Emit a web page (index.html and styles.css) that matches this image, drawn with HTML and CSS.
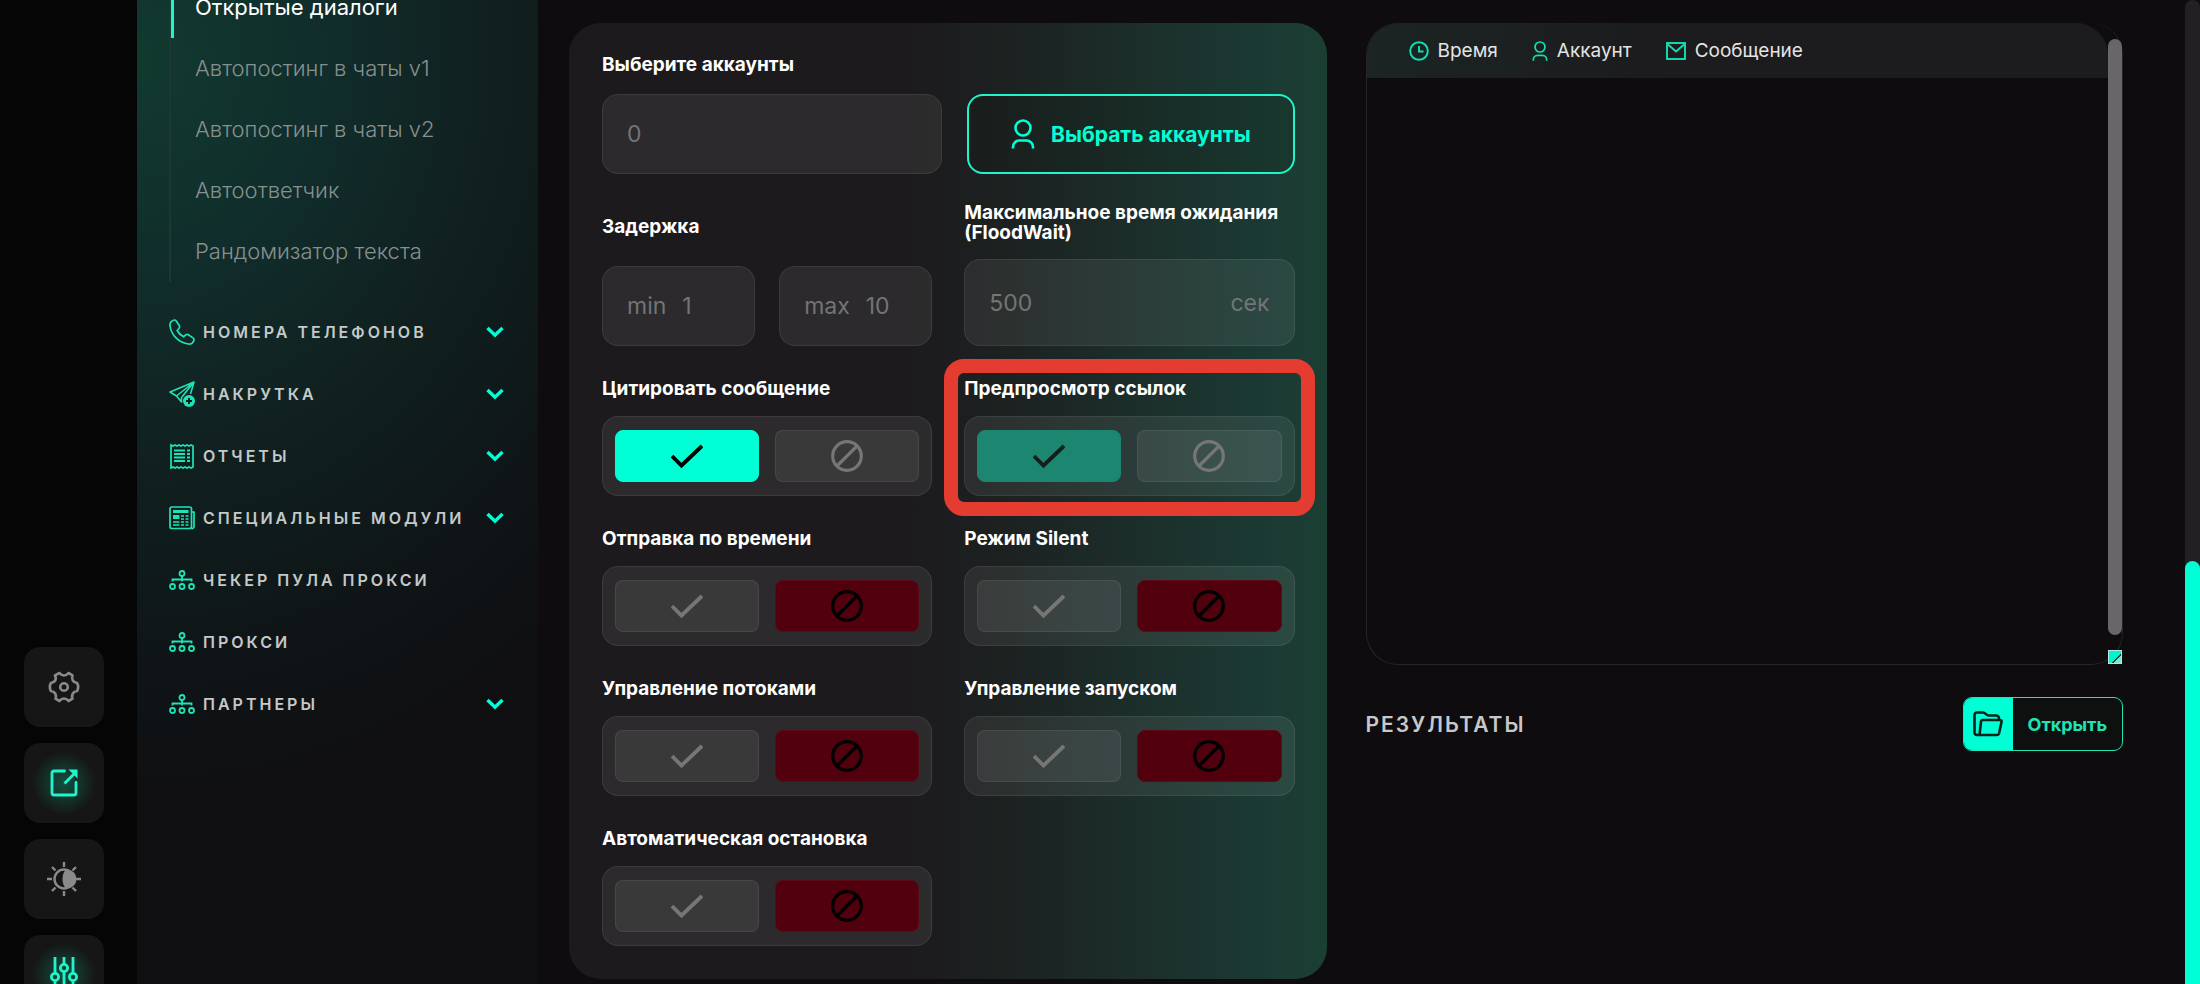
FILE: index.html
```html
<!DOCTYPE html>
<html lang="ru">
<head>
    <meta charset="UTF-8">
    <meta name="viewport" content="width=device-width, initial-scale=1.0">
    <title>Открытые диалоги</title>
    <link rel="stylesheet" href="styles.css">
</head>
<body>
    <svg class="sprite" aria-hidden="true">
        <symbol id="i-check" viewBox="0 0 32 32"><path d="M1 16l9.500 9.500L31 6" fill="none" stroke="currentColor" stroke-width="3.800"/></symbol>
        <symbol id="i-ban" viewBox="0 0 32 32"><circle cx="16" cy="16" r="14.300" fill="none" stroke="currentColor" stroke-width="3.200"/><path d="M26 6L6 26" stroke="currentColor" stroke-width="3.200"/></symbol>
        <symbol id="i-chevron" viewBox="0 0 18 12"><path d="M1.500 2L9 9.200 16.500 2" fill="none" stroke="currentColor" stroke-width="3.400"/></symbol>
        <symbol id="i-user" viewBox="0 0 24 30"><g fill="none" stroke="currentColor" stroke-width="2.600"><circle cx="12" cy="9" r="7.500"/><path d="M2 29.500V28a6.500 6.500 0 0 1 6.500-6.500h7A6.500 6.500 0 0 1 22 28v1.500"/></g></symbol>
        <symbol id="i-net" viewBox="0 0 26 20"><g fill="none" stroke="currentColor" stroke-width="1.800"><circle cx="13" cy="3.500" r="2.500"/><circle cx="3.500" cy="16.500" r="2.500"/><circle cx="13" cy="16.500" r="2.500"/><circle cx="22.500" cy="16.500" r="2.500"/><path d="M13 6v3.500M3.500 11.500v-2h19v2M13 9v2.500"/></g></symbol>
    </svg>

    <div class="app">
        <div class="rail">
            <button class="rail-button" aria-label="Настройки">
                <svg width="34" height="34" viewBox="0 0 34 34" fill="none" stroke="currentColor" stroke-width="2.600" stroke-linejoin="round"><path d="M12.500 3q2 2.500 4.500 2.500T21.500 3l4 2.300q-1 3 .3 5.200t4.400 2.500q2 4 0 8-3.100.3-4.400 2.500t-.3 5.200l-4 2.300Q19.500 28.500 17 28.500T12.500 31l-4-2.300q1-3-.3-5.200T3.800 21q-2-4 0-8 3.100-.3 4.400-2.500t-.3-5.200z"/><circle cx="17" cy="17" r="3.800"/></svg>
            </button>
            <button class="rail-button active" aria-label="Открыть в новом окне">
                <svg width="30" height="30" viewBox="0 0 30 30" fill="none" stroke="currentColor" stroke-width="2.800"><path d="M15.500 3H5a2 2 0 0 0-2 2v20a2 2 0 0 0 2 2h20a2 2 0 0 0 2-2V14.500" stroke-linecap="round"/><path d="M15.500 15.500L26 5"/><path d="M19.500 1.500h9v9z" fill="currentColor" stroke="none"/></svg>
            </button>
            <button class="rail-button" aria-label="Тема">
                <svg width="36" height="36" viewBox="0 0 36 36" fill="none" stroke="currentColor" stroke-width="2.400"><circle cx="18" cy="18" r="9.500"/><path d="M21 8.500a9.500 9.500 0 0 1 0 19c-6-2-6-17 0-19z" fill="currentColor" stroke="none"/><path d="M18 1v5M18 30v5M1 18h5M30 18h5M6 6l3.500 3.500M26.500 26.500L30 30M30 6l-3.500 3.500M9.500 26.500L6 30"/></svg>
            </button>
            <button class="rail-button active" aria-label="Фильтры">
                <svg width="30" height="38" viewBox="0 0 30 38" fill="none" stroke="currentColor" stroke-width="2.800"><path d="M6 1v16M6 25v12M15 1v7M15 16v21M24 1v16M24 25v12"/><circle cx="6" cy="21" r="3.600"/><circle cx="15" cy="12" r="3.600"/><circle cx="24" cy="21" r="3.600"/></svg>
            </button>
        </div>

        <nav class="sidebar">
            <ul class="submenu">
                <li><a class="current" href="#">Открытые диалоги</a></li>
                <li><a href="#">Автопостинг в чаты v1</a></li>
                <li><a href="#">Автопостинг в чаты v2</a></li>
                <li><a href="#">Автоответчик</a></li>
                <li><a href="#">Рандомизатор текста</a></li>
            </ul>
            <ul class="menu">
                <li><a href="#">
                    <svg class="menu-icon" viewBox="0 0 26 26" fill="none" stroke="currentColor" stroke-width="1.700"><path d="M4.500 1.200C2.200 2 .8 4 1 6.500 2 16 10 24 19.500 25c2.500.2 4.500-1.200 5.300-3.300.4-1.100.1-2.200-.8-2.800l-4.600-3.200c-.9-.6-2-.5-2.800.2l-2 1.900c-2.900-1.400-5-3.500-6.400-6.300l1.700-2c.8-.9.900-2 .3-3L7.300 2C6.600 1.100 5.500.8 4.500 1.200z"/></svg>
                    <span>Номера телефонов</span><svg class="chevron"><use href="#i-chevron"/></svg></a></li>
                <li><a href="#">
                    <svg class="menu-icon" viewBox="0 0 26 26" fill="none" stroke="currentColor" stroke-width="1.600" stroke-linejoin="round"><path d="M25 1L1 11l6.500 4L25 1 12.500 16.500M7.500 15l5 6v-4.500M25 1l-3.500 12"/><circle cx="20" cy="20" r="6" fill="currentColor" stroke="none"/><path class="plus" d="M20 17v6M17 20h6"/></svg>
                    <span>Накрутка</span><svg class="chevron"><use href="#i-chevron"/></svg></a></li>
                <li><a href="#">
                    <svg class="menu-icon" viewBox="0 0 26 26" fill="none" stroke="currentColor" stroke-width="1.700"><path d="M2 2l2 1 2-1 2 1 2-1 2 1 2-1 2 1 2-1 2 1 2-1 2 1v21l-2 1-2-1-2 1-2-1-2 1-2-1-2 1-2-1-2 1-2-1-2 1V2z"/><path d="M5 7.500h11M5 11h11M5 14.500h11M5 18h11M18 7.500h3M18 11h3M18 14.500h3M18 18h3" stroke-width="2"/></svg>
                    <span>Отчеты</span><svg class="chevron"><use href="#i-chevron"/></svg></a></li>
                <li><a href="#">
                    <svg class="menu-icon" viewBox="0 0 26 26" fill="none" stroke="currentColor" stroke-width="1.700"><rect x="1" y="2" width="21.500" height="21.500" rx="2"/><path d="M22.500 7H25v14.500a2 2 0 0 1-2.500 2"/><path d="M4 6.500h15.500" stroke-width="3"/><path d="M4 12h6.500" stroke-width="4"/><path d="M4 17h6.500M4 20h6.500M12 11h3M12 14h3M12 17h3M12 20h3M16.500 11h3M16.500 14h3M16.500 17h3M16.500 20h3"/></svg>
                    <span>Специальные модули</span><svg class="chevron"><use href="#i-chevron"/></svg></a></li>
                <li><a href="#"><svg class="menu-icon net"><use href="#i-net"/></svg><span>Чекер пула прокси</span></a></li>
                <li><a href="#"><svg class="menu-icon net"><use href="#i-net"/></svg><span>Прокси</span></a></li>
                <li><a href="#"><svg class="menu-icon net"><use href="#i-net"/></svg><span>Партнеры</span><svg class="chevron"><use href="#i-chevron"/></svg></a></li>
            </ul>
        </nav>

        <main class="content">
            <form class="card">
                <div class="accounts">
                    <label class="label" for="accounts">Выберите аккаунты</label>
                    <div class="field"><input id="accounts" type="text" placeholder="0"></div>
                    <button class="pick-button" type="button"><svg><use href="#i-user"/></svg>Выбрать аккаунты</button>
                </div>

                <div class="grid timing">
                    <div>
                        <div class="label delay-label">Задержка</div>
                        <div class="pair">
                            <div class="field"><label for="min">min</label><input id="min" type="text" placeholder="1"></div>
                            <div class="field"><label for="max">max</label><input id="max" type="text" placeholder="10"></div>
                        </div>
                    </div>
                    <div>
                        <label class="label wait-label" for="wait">Максимальное время ожидания (FloodWait)</label>
                        <div class="field tall"><input id="wait" type="text" placeholder="500"><span>сек</span></div>
                    </div>
                </div>

                <div class="grid toggles">
                    <div class="option" role="radiogroup" aria-labelledby="t-quote">
                        <div class="label" id="t-quote">Цитировать сообщение</div>
                        <div class="switch">
                            <label class="yes"><input type="radio" name="quote" aria-label="Да" checked><svg><use href="#i-check"/></svg></label>
                            <label class="no"><input type="radio" name="quote" aria-label="Нет"><svg class="ban"><use href="#i-ban"/></svg></label>
                        </div>
                    </div>
                    <div class="option marked" role="radiogroup" aria-labelledby="t-preview">
                        <div class="label" id="t-preview">Предпросмотр ссылок</div>
                        <div class="switch disabled">
                            <label class="yes"><input type="radio" name="preview" aria-label="Да" checked disabled><svg><use href="#i-check"/></svg></label>
                            <label class="no"><input type="radio" name="preview" aria-label="Нет" disabled><svg><use href="#i-ban"/></svg></label>
                        </div>
                    </div>
                    <div class="option" role="radiogroup" aria-labelledby="t-time">
                        <div class="label" id="t-time">Отправка по времени</div>
                        <div class="switch">
                            <label class="yes"><input type="radio" name="time" aria-label="Да"><svg><use href="#i-check"/></svg></label>
                            <label class="no"><input type="radio" name="time" aria-label="Нет" checked><svg><use href="#i-ban"/></svg></label>
                        </div>
                    </div>
                    <div class="option" role="radiogroup" aria-labelledby="t-silent">
                        <div class="label" id="t-silent">Режим Silent</div>
                        <div class="switch">
                            <label class="yes"><input type="radio" name="silent" aria-label="Да"><svg><use href="#i-check"/></svg></label>
                            <label class="no"><input type="radio" name="silent" aria-label="Нет" checked><svg><use href="#i-ban"/></svg></label>
                        </div>
                    </div>
                    <div class="option" role="radiogroup" aria-labelledby="t-threads">
                        <div class="label" id="t-threads">Управление потоками</div>
                        <div class="switch">
                            <label class="yes"><input type="radio" name="threads" aria-label="Да"><svg><use href="#i-check"/></svg></label>
                            <label class="no"><input type="radio" name="threads" aria-label="Нет" checked><svg><use href="#i-ban"/></svg></label>
                        </div>
                    </div>
                    <div class="option" role="radiogroup" aria-labelledby="t-launch">
                        <div class="label" id="t-launch">Управление запуском</div>
                        <div class="switch">
                            <label class="yes"><input type="radio" name="launch" aria-label="Да"><svg><use href="#i-check"/></svg></label>
                            <label class="no"><input type="radio" name="launch" aria-label="Нет" checked><svg><use href="#i-ban"/></svg></label>
                        </div>
                    </div>
                    <div class="option" role="radiogroup" aria-labelledby="t-stop">
                        <div class="label" id="t-stop">Автоматическая остановка</div>
                        <div class="switch">
                            <label class="yes"><input type="radio" name="stop" aria-label="Да"><svg><use href="#i-check"/></svg></label>
                            <label class="no"><input type="radio" name="stop" aria-label="Нет" checked><svg><use href="#i-ban"/></svg></label>
                        </div>
                    </div>
                </div>
            </form>

            <section class="side">
                <div class="log">
                    <div class="log-main">
                        <div class="log-head">
                            <span><svg width="20" height="20" viewBox="0 0 20 20" fill="none" stroke="currentColor" stroke-width="1.900"><circle cx="10" cy="10" r="8.800"/><path d="M10 5v5.500h4.500"/></svg>Время</span>
                            <span><svg width="16" height="20"><use href="#i-user"/></svg>Аккаунт</span>
                            <span><svg width="20" height="20" viewBox="0 0 20 20" fill="none" stroke="currentColor" stroke-width="1.900"><rect x="1" y="2" width="18" height="16"/><path d="M2 3.500l8 7 8-7"/></svg>Сообщение</span>
                        </div>
                    </div>
                    <div class="log-scroll">
                        <div class="log-thumb"></div>
                        <div class="log-resizer"></div>
                    </div>
                </div>
                <div class="results">
                    <h2>Результаты</h2>
                    <button class="open-button">
                        <span class="open-icon"><svg width="30" height="26" viewBox="0 0 30 26" fill="none" stroke="currentColor" stroke-width="2.600" stroke-linejoin="round" stroke-linecap="round"><path d="M6 24H4a2.500 2.500 0 0 1-2.500-2.500V4A2.500 2.500 0 0 1 4 1.500h6c2.500 0 3 3 6 3h7A3 3 0 0 1 26 7"/><path d="M9.500 9H27a1.500 1.500 0 0 1 1.500 2L26 22.500a2 2 0 0 1-2 1.500H6.500L8 10.500A1.700 1.700 0 0 1 9.500 9z"/></svg></span>
                        <span class="open-text">Открыть</span>
                    </button>
                </div>
            </section>
        </main>

        <div class="page-scroll"><div class="page-thumb"></div></div>
    </div>
</body>
</html>
```
FILE: styles.css
```css
* {
    box-sizing: border-box;
}

body {
    margin: 0;
    font-family: Inter, "Open Sans", sans-serif;
    background-color: #0e0c0f;
    color: #fff;
}

ul {
    list-style: none;
    margin: 0;
    padding: 0;
}

a {
    color: inherit;
    text-decoration: none;
}

button,
input {
    font-family: inherit;
}

.sprite {
    display: none;
}

.app {
    display: flex;
    height: 100vh;
    overflow: hidden;
}

/* left icon rail */
.rail {
    flex: none;
    width: 137px;
    padding: 647px 24px 0;
    display: flex;
    flex-direction: column;
    gap: 16px;
    background-color: #050505;
}

.rail-button {
    flex: none;
    width: 80px;
    height: 80px;
    border: none;
    border-radius: 16px;
    background-color: #161616;
    color: #8a8a8a;
    display: flex;
    align-items: center;
    justify-content: center;
    cursor: pointer;
}

.rail-button.active {
    color: #1ff5cb;
    background-image: radial-gradient(circle, #12503f 0, #161616 32px);
}

/* menu */
.sidebar {
    flex: none;
    width: 401px;
    padding: 0 34px 0 32px;
    background: radial-gradient(ellipse 600px 680px at 0 60px, #123a2f 0%, #102d2b 32%, #10201f 60%, #0f1517 88%, #0f0f11 110%);
}

.submenu {
    margin: -23px 0 19px 0;
    border-left: 2px solid #1c3833;
    font-size: 22px;
    font-weight: 300;
    color: #87908f;
}

.submenu a {
    display: block;
    height: 61px;
    line-height: 61px;
    padding-left: 24px;
}

.submenu .current {
    border-left: 3px solid #1ff5cb;
    padding-left: 21px;
    font-weight: 400;
    color: #fff;
}

.menu a {
    display: flex;
    align-items: center;
    height: 62px;
    font-size: 16px;
    font-weight: 600;
    letter-spacing: 3px;
    text-transform: uppercase;
    color: #c5c9c9;
}

.menu-icon {
    width: 26px;
    height: 26px;
    margin-right: 8px;
    color: #1fe3b6;
}

.menu-icon.net {
    height: 20px;
}

.plus {
    stroke: #0f1b1c;
    stroke-width: 2;
}

.chevron {
    width: 18px;
    height: 12px;
    margin-left: auto;
    color: #00ffd5;
}

.content {
    flex: 1;
    display: grid;
    grid-template-columns: 1fr 1fr;
    align-items: start;
    gap: 39px;
    padding: 23px 62px 0 31px;
}

/* form */
.card {
    padding: 32px 32px 33px 33px;
    border-radius: 32px;
    background: linear-gradient(90deg, #1c1a1d 45%, #1c2221 58%, #1b3a34 92%, #1b3f33 100%);
}

.label {
    display: block;
    font-size: 19px;
    font-weight: 700;
    line-height: 20px;
}

.accounts {
    display: grid;
    grid-template-columns: 341fr 328fr;
    gap: 19px 25px;
}

.accounts .label {
    grid-column: 1 / -1;
}

.field {
    display: flex;
    align-items: center;
    gap: 16px;
    min-width: 0;
    height: 80px;
    padding: 0 24px;
    border: 1px solid rgba(255, 255, 255, 0.08);
    border-radius: 16px;
    background-color: rgba(255, 255, 255, 0.07);
    font-size: 23px;
    color: #747476;
}

.field input {
    flex: 1;
    min-width: 0;
    width: 100%;
    padding: 0;
    border: none;
    outline: none;
    background: none;
    font-size: 23px;
    color: #fff;
}

.field input::placeholder {
    color: #747476;
    opacity: 1;
}

.field.tall {
    height: 87px;
}

.pick-button {
    display: flex;
    align-items: center;
    justify-content: center;
    gap: 16px;
    padding: 0;
    border: 2px solid #1ff5cb;
    border-radius: 16px;
    background-color: rgba(0, 20, 0, 0.1);
    color: #00ffd5;
    font-size: 21px;
    font-weight: 700;
    cursor: pointer;
}

.pick-button svg {
    width: 24px;
    height: 30px;
}

.grid {
    display: grid;
    grid-template-columns: 1fr 1fr;
    column-gap: 32px;
}

.timing {
    align-items: end;
    margin: 29px 0 33px;
}

.delay-label {
    margin-bottom: 29px;
}

.wait-label {
    margin-bottom: 16px;
}

.pair {
    display: grid;
    grid-template-columns: 1fr 1fr;
    gap: 24px;
}

.toggles {
    row-gap: 33px;
}

.option {
    position: relative;
}

.option .label {
    margin-bottom: 17px;
}

/* red frame around the highlighted option */
.marked::after {
    content: "";
    position: absolute;
    inset: -20px;
    border: 14px solid #e53c32;
    border-radius: 20px;
    pointer-events: none;
}

.switch {
    display: grid;
    grid-template-columns: 1fr 1fr;
    gap: 16px;
    height: 80px;
    padding: 13px 12px;
    border: 1px solid rgba(255, 255, 255, 0.08);
    border-radius: 16px;
    background-color: rgba(255, 255, 255, 0.07);
}

.switch label {
    display: flex;
    align-items: center;
    justify-content: center;
    border: 1px solid rgba(255, 255, 255, 0.07);
    border-radius: 8px;
    background-color: rgba(255, 255, 255, 0.07);
    color: #767676;
    cursor: pointer;
}

.switch input {
    position: absolute;
    opacity: 0;
}

.switch svg {
    width: 32px;
    height: 32px;
}

.switch .yes:has(input:checked) {
    border-color: #00ffd5;
    background-color: #00ffd5;
    color: #000;
}

.switch .no:has(input:checked) {
    border-color: #5c0a18;
    background-color: #52000d;
    color: #000;
}

.switch.disabled .yes:has(input:checked) {
    border-color: #1d8670;
    background-color: #1d8670;
    color: #12201d;
}

/* log and results */
.log {
    display: flex;
    height: 642px;
    border: 1px solid #252427;
    border-top: none;
    border-radius: 32px;
}

.log-main {
    flex: 1;
}

.log-head {
    display: flex;
    align-items: center;
    gap: 34px;
    height: 55px;
    padding-left: 42px;
    border-radius: 32px 32px 0 0;
    background: linear-gradient(90deg, #1b2523, #1c1b1d 40%);
    font-size: 19px;
    color: #e4e4e4;
}

.log-head span {
    display: flex;
    align-items: center;
    gap: 9px;
}

.log-head svg {
    color: #12e0b4;
}

.log-scroll {
    display: flex;
    flex-direction: column;
    justify-content: space-between;
    width: 14px;
    padding-top: 16px;
}

.log-thumb {
    height: 596px;
    border-radius: 7px;
    background-color: #69666a;
}

.log-resizer {
    height: 14px;
    border: 1px solid #b8e8dd;
    background: linear-gradient(135deg, #00f5cb 60%, #14463c 60%, #14463c 70%, #7fe8d2 70%);
}

.results {
    display: flex;
    align-items: center;
    justify-content: space-between;
    margin-top: 32px;
}

.results h2 {
    margin: 0;
    font-size: 21px;
    font-weight: 600;
    letter-spacing: 2px;
    text-transform: uppercase;
    color: #c8c8c8;
}

.open-button {
    display: flex;
    height: 54px;
    padding: 0;
    overflow: hidden;
    border: 1px solid #1fe3b6;
    border-radius: 9px;
    background-color: #0d100f;
    color: #1fe3b6;
    font-size: 18px;
    font-weight: 700;
    cursor: pointer;
}

.open-icon {
    display: flex;
    align-items: center;
    justify-content: center;
    width: 49px;
    height: 100%;
    background-color: #00ffd5;
    color: #06201c;
}

.open-text {
    align-self: center;
    padding: 0 15px;
}

.page-scroll {
    flex: none;
    display: flex;
    align-items: flex-end;
    width: 15px;
    border-radius: 8px 8px 0 0;
    background-color: #222023;
}

.page-thumb {
    width: 100%;
    height: 43%;
    border-radius: 8px 8px 0 0;
    background-color: #00ffd5;
}
```
